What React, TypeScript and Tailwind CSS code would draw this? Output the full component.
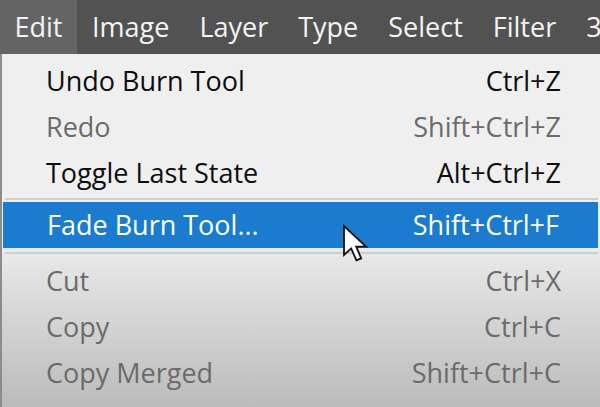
import React from "react";

type Item = { label: string; shortcut: string; disabled?: boolean; active?: boolean };

const menuBar = ["Edit", "Image", "Layer", "Type", "Select", "Filter", "3D"];

const top: Item[] = [
  { label: "Undo Burn Tool", shortcut: "Ctrl+Z" },
  { label: "Redo", shortcut: "Shift+Ctrl+Z", disabled: true },
  { label: "Toggle Last State", shortcut: "Alt+Ctrl+Z" },
];

const bottom: Item[] = [
  { label: "Cut", shortcut: "Ctrl+X", disabled: true },
  { label: "Copy", shortcut: "Ctrl+C", disabled: true },
  { label: "Copy Merged", shortcut: "Shift+Ctrl+C", disabled: true },
];

function Row({ item }: { item: Item }) {
  const color = item.active ? "text-white" : item.disabled ? "text-[#6b6a6c]" : "text-[#0d0d0f]";
  return (
    <div className={`flex h-[46px] items-center justify-between pl-[44px] pr-[39px] ${color}`}>
      <span>{item.label}</span>
      <span>{item.shortcut}</span>
    </div>
  );
}

function Separator({ h }: { h: string }) {
  return (
    <div className={`flex items-center pl-[3px] pr-[2px] ${h}`}>
      <div className="h-[2px] w-full bg-[#cfcecf]" />
    </div>
  );
}

function Cursor() {
  return (
    <svg
      className="absolute left-[342px] top-[224px]"
      width="30"
      height="40"
      viewBox="0 0 15 20"
    >
      <path
        d="M1 1 L1 15.5 L4.6 12.2 L7.2 18.2 L9.6 17.2 L7.1 11.3 L12 11.3 Z"
        fill="#ffffff"
        stroke="#111111"
        strokeWidth="0.9"
        strokeLinejoin="miter"
      />
    </svg>
  );
}

export default function App() {
  return (
    <div
      className="relative h-[407px] w-[600px] overflow-hidden bg-[#efeeef] text-[27px]"
      style={{ fontFamily: '"Open Sans", "Noto Sans", sans-serif' }}
    >
      <div className="flex h-[54px] items-center whitespace-nowrap bg-[#535253] text-[#f4f4f4]">
        {menuBar.map((m, i) => (
          <div
            key={m}
            className={
              i === 0
                ? "flex h-full w-[77px] shrink-0 items-center justify-center bg-[#656465]"
                : "flex h-full shrink-0 items-center px-[15px]"
            }
          >
            {m}
          </div>
        ))}
      </div>
      <div className="h-[353px] border-l-2 border-[#8d8c8d] bg-gradient-to-b from-[#f0eff0] from-50% to-[#bcbbbc] pt-[4px]">
        {top.map((it) => (
          <Row key={it.label} item={it} />
        ))}
        <Separator h="h-[6px]" />
        <div className="pl-[1px] pr-[2px]">
          <div className="bg-[#1a7bcf]">
            <Row item={{ label: "Fade Burn Tool...", shortcut: "Shift+Ctrl+F", active: true }} />
          </div>
        </div>
        <Separator h="h-[10px]" />
        {bottom.map((it) => (
          <Row key={it.label} item={it} />
        ))}
      </div>
      <Cursor />
    </div>
  );
}
